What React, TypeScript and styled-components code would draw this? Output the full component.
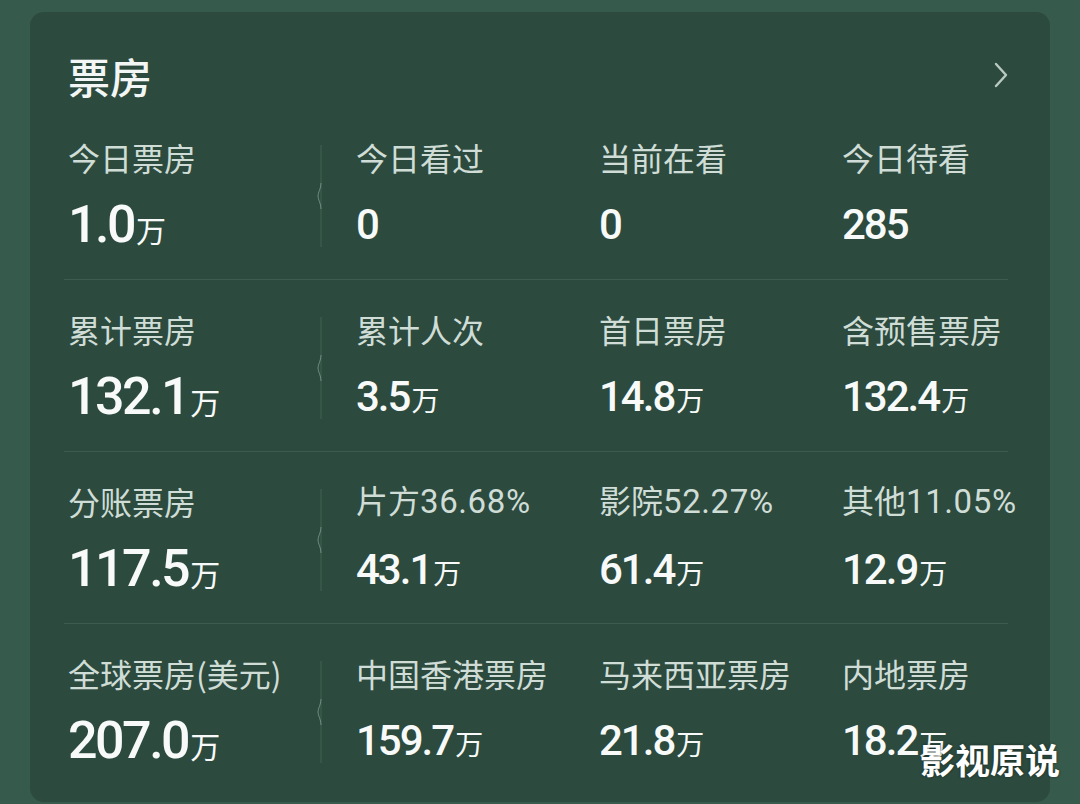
import React from 'react';
import styled, { createGlobalStyle } from 'styled-components';

const GlobalStyle = createGlobalStyle`
  html, body {
    margin: 0;
    padding: 0;
    background: #365a4c;
  }
  body {
    font-family: 'Roboto', 'Noto Sans CJK SC', sans-serif;
  }
`;

const Page = styled.div`
  position: relative;
  width: 1080px;
  height: 804px;
  overflow: hidden;
  padding: 12px 30px 0;
  box-sizing: border-box;
`;

const Card = styled.div`
  background: #2c4a3e;
  border-radius: 14px;
  height: 790px;
  padding: 0 42px 0 34px;
  box-sizing: border-box;
`;

const Header = styled.div`
  display: flex;
  align-items: center;
  justify-content: space-between;
  padding: 40px 0 8px 4px;
`;

const Title = styled.h1`
  margin: 0;
  font-family: 'Noto Sans CJK SC', sans-serif;
  font-size: 42px;
  line-height: 48px;
  font-weight: 500;
  color: #f2f6f4;
`;

const Row = styled.div<{ $last?: boolean }>`
  display: grid;
  grid-template-columns: 253px 39px 243px 243px 1fr;
  align-items: center;
  height: 172px;
  box-sizing: border-box;
  border-bottom: ${({ $last }) => ($last ? 'none' : '1px solid #3b5c4e')};
`;

const Cell = styled.div<{ $first?: boolean }>`
  display: flex;
  flex-direction: column;
  gap: 20px;
  padding-left: ${({ $first }) => ($first ? '4px' : '0')};
  white-space: nowrap;
  margin-top: 2px;
`;

const Label = styled.div`
  font-family: 'Noto Sans CJK SC', sans-serif;
  font-size: 32px;
  line-height: 40px;
  color: #cfddd6;
`;

const Pct = styled.span`
  font-family: 'Roboto', sans-serif;
  font-size: 33px;
  letter-spacing: 0.6px;
`;

const Value = styled.div`
  display: flex;
  align-items: baseline;
  height: 56px;
  line-height: 56px;
  color: #f7faf8;
`;

const Num = styled.span<{ $big?: boolean }>`
  font-family: 'Roboto', sans-serif;
  font-weight: 500;
  font-size: ${({ $big }) => ($big ? '52px' : '42px')};
  letter-spacing: ${({ $big }) => ($big ? '-2.5px' : '-2px')};
`;

const Unit = styled.span<{ $big?: boolean }>`
  font-family: 'Noto Sans CJK SC', sans-serif;
  font-size: ${({ $big }) => ($big ? '30px' : '28px')};
  margin-left: 2px;
`;

const DividerBox = styled.div`
  height: 102px;
  align-self: center;
  margin-top: 4px;
`;

const Watermark = styled.div`
  position: absolute;
  right: 20px;
  bottom: 20px;
  font-family: 'Noto Sans CJK SC', sans-serif;
  font-size: 35px;
  font-weight: 700;
  color: #ffffff;
  text-shadow: 0 0 3px rgba(0, 0, 0, 0.45);
`;

const Chevron = () => (
  <svg width="18" height="28" viewBox="0 0 18 28">
    <path d="M6 2 L16 13 L6 24" fill="none" stroke="#b9cbc1" strokeWidth="2.4" strokeLinecap="round" strokeLinejoin="round" />
  </svg>
);

const Divider = () => (
  <DividerBox>
    <svg width="10" height="102" viewBox="0 0 10 102">
      <path d="M4 0 V102" stroke="#3f5f51" strokeWidth="1.2" />
      <path d="M4 38 C4 44 1 47 1 51 C1 55 4 58 4 64" fill="none" stroke="#6f8c7f" strokeWidth="1" />
    </svg>
  </DividerBox>
);

type Item = { label: React.ReactNode; num: string; unit?: string };

const rows: Item[][] = [
  [
    { label: '今日票房', num: '1.0', unit: '万' },
    { label: '今日看过', num: '0' },
    { label: '当前在看', num: '0' },
    { label: '今日待看', num: '285' },
  ],
  [
    { label: '累计票房', num: '132.1', unit: '万' },
    { label: '累计人次', num: '3.5', unit: '万' },
    { label: '首日票房', num: '14.8', unit: '万' },
    { label: '含预售票房', num: '132.4', unit: '万' },
  ],
  [
    { label: '分账票房', num: '117.5', unit: '万' },
    { label: <>片方<Pct>36.68%</Pct></>, num: '43.1', unit: '万' },
    { label: <>影院<Pct>52.27%</Pct></>, num: '61.4', unit: '万' },
    { label: <>其他<Pct>11.05%</Pct></>, num: '12.9', unit: '万' },
  ],
  [
    { label: '全球票房(美元)', num: '207.0', unit: '万' },
    { label: '中国香港票房', num: '159.7', unit: '万' },
    { label: '马来西亚票房', num: '21.8', unit: '万' },
    { label: '内地票房', num: '18.2', unit: '万' },
  ],
];

const Stat: React.FC<{ item: Item; first?: boolean }> = ({ item, first }) => (
  <Cell $first={first}>
    <Label>{item.label}</Label>
    <Value>
      <Num $big={first}>{item.num}</Num>
      {item.unit && <Unit $big={first}>{item.unit}</Unit>}
    </Value>
  </Cell>
);

const App: React.FC = () => (
  <Page>
    <GlobalStyle />
    <Card>
      <Header>
        <Title>票房</Title>
        <Chevron />
      </Header>
      {rows.map((row, i) => (
        <Row key={i} $last={i === rows.length - 1}>
          <Stat item={row[0]} first />
          <Divider />
          <Stat item={row[1]} />
          <Stat item={row[2]} />
          <Stat item={row[3]} />
        </Row>
      ))}
    </Card>
    <Watermark>影视原说</Watermark>
  </Page>
);

export default App;
